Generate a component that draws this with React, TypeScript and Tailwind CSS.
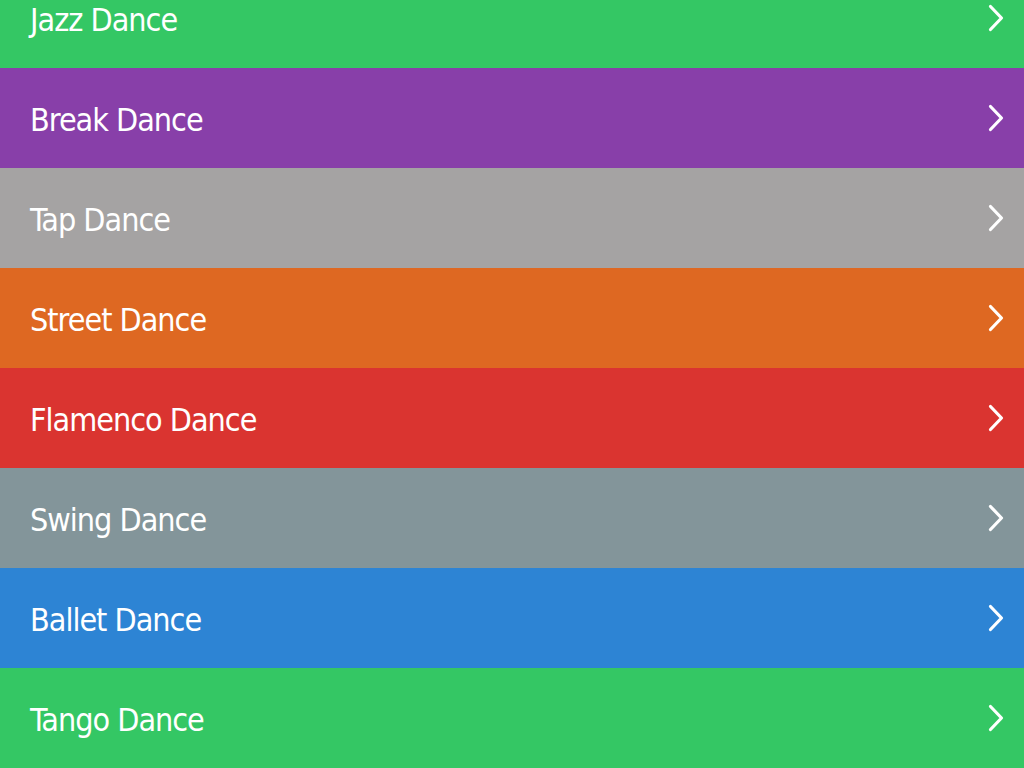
import React from "react";

const items = [
  { name: "Jazz Dance", bg: "bg-[#34c764]" },
  { name: "Break Dance", bg: "bg-[#883fa9]" },
  { name: "Tap Dance", bg: "bg-[#a5a3a3]" },
  { name: "Street Dance", bg: "bg-[#de6822]" },
  { name: "Flamenco Dance", bg: "bg-[#da3430]" },
  { name: "Swing Dance", bg: "bg-[#83959a]" },
  { name: "Ballet Dance", bg: "bg-[#2d84d4]" },
  { name: "Tango Dance", bg: "bg-[#34c764]" },
];

function Chevron() {
  return (
    <svg width="16" height="28" viewBox="0 0 16 28" className="shrink-0">
      <polyline
        points="2.5,2.5 13.5,14 2.5,25.5"
        fill="none"
        stroke="white"
        strokeWidth="3.2"
        strokeLinecap="round"
        strokeLinejoin="round"
      />
    </svg>
  );
}

export default function App() {
  return (
    <div className="w-[1024px] h-[768px] overflow-hidden bg-white">
      <div className="-mt-[32px] flex flex-col">
        {items.map((it) => (
          <div
            key={it.name}
            className={`${it.bg} h-[100px] flex items-center justify-between pl-[30px] pr-[20px]`}
          >
            <span className="text-white text-[32px] tracking-[-1px] pt-[4px] font-['DejaVu_Sans_Condensed','DejaVu_Sans',sans-serif] leading-none">
              {it.name}
            </span>
            <Chevron />
          </div>
        ))}
      </div>
    </div>
  );
}
